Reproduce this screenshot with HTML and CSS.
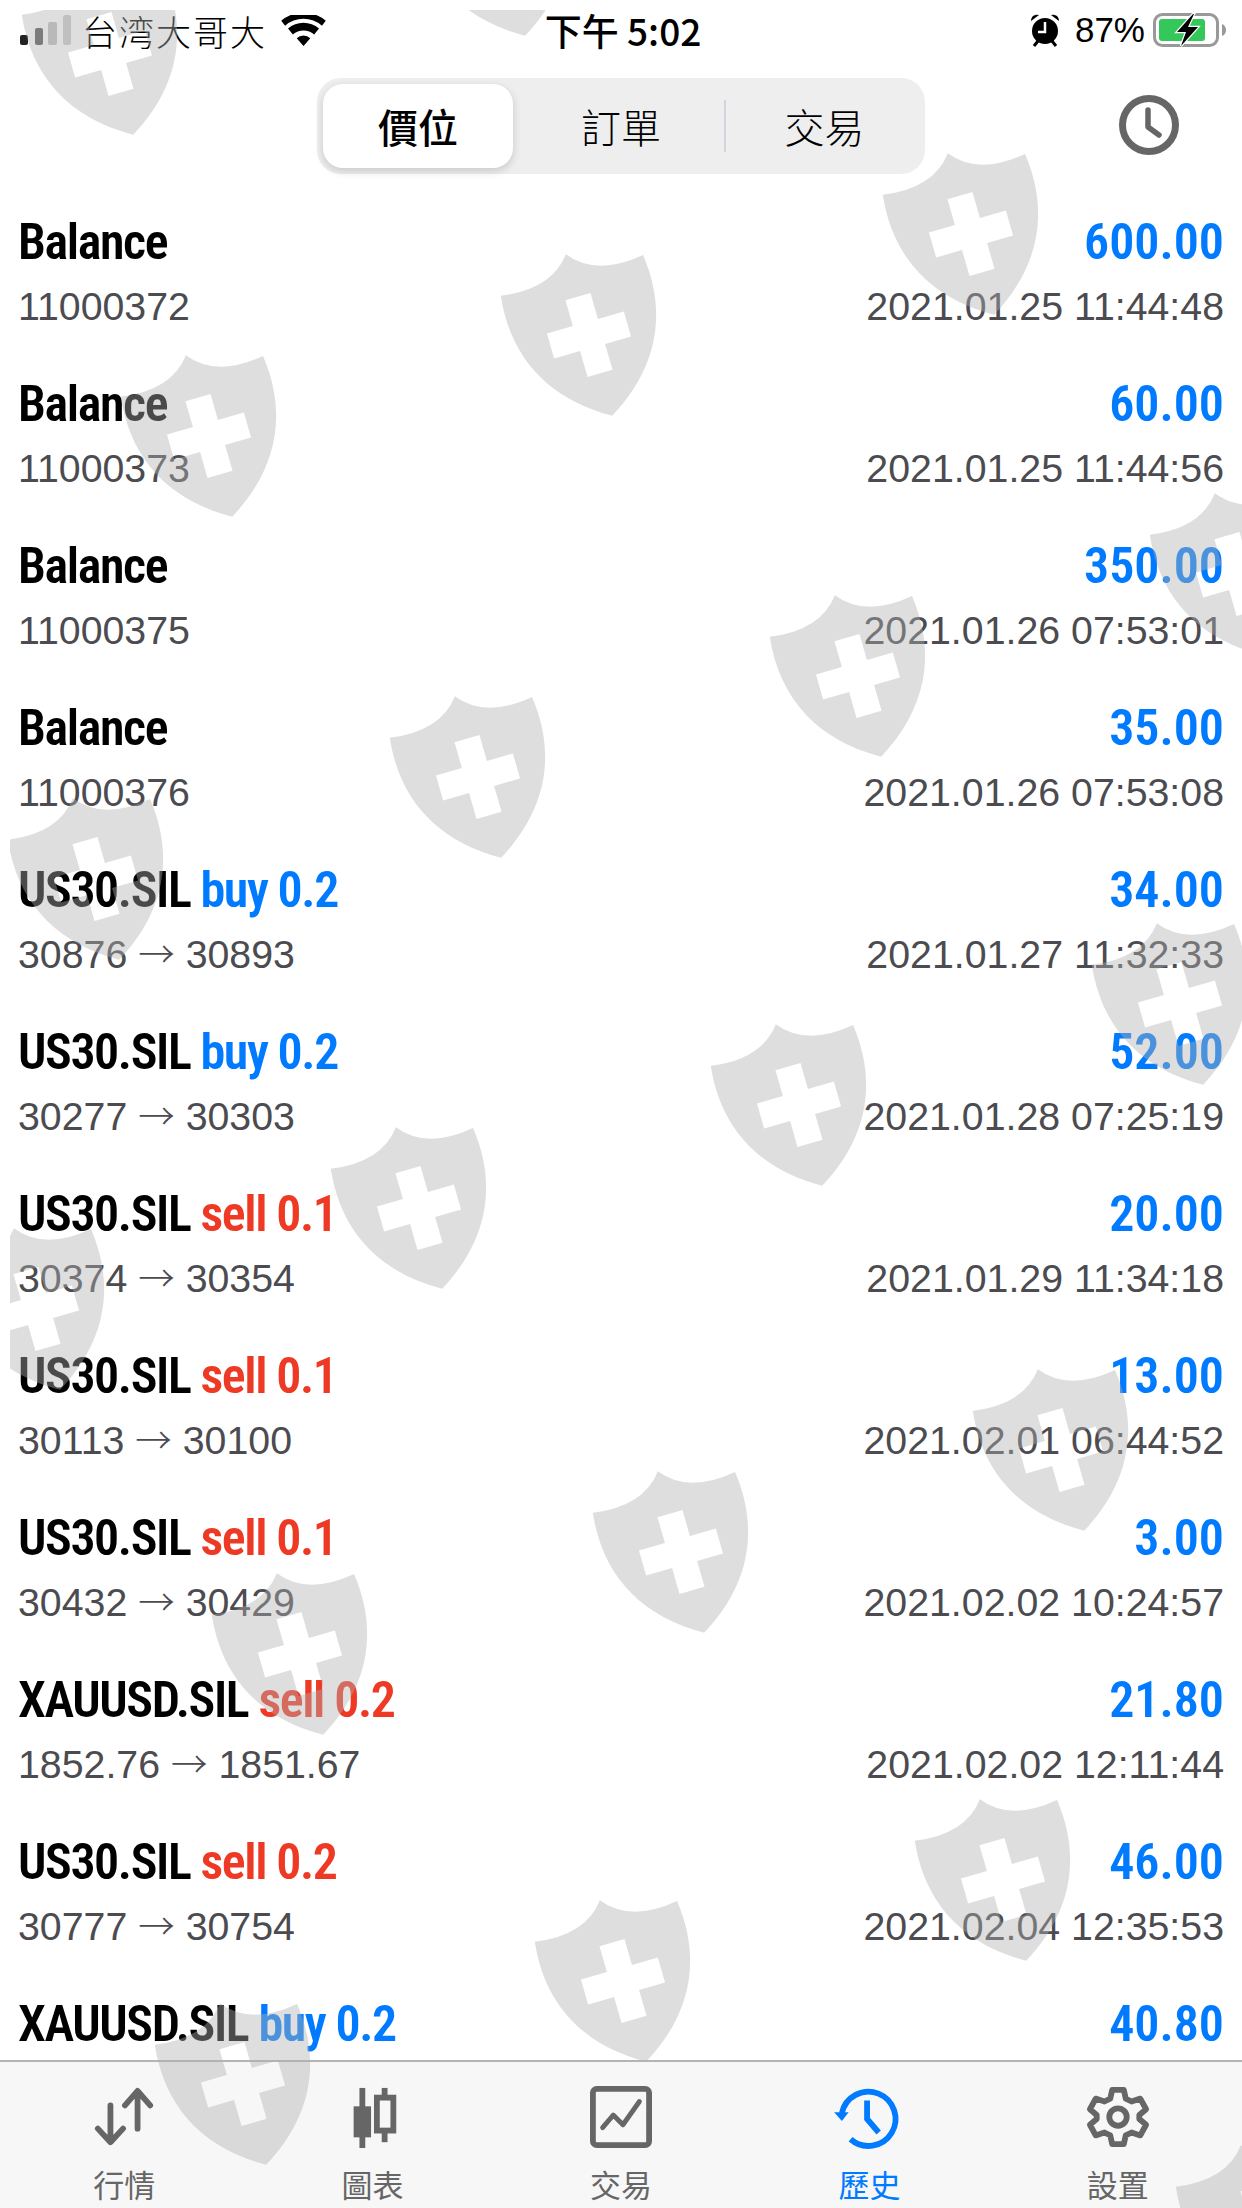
FILE: index.html
```html
<!DOCTYPE html>
<html lang="zh-Hant">
<head>
  <meta charset="UTF-8" />
  <title>歷史</title>
  <link rel="stylesheet" href="styles.css">
</head>
<body>
  <div class="screen">
    <div class="status-bar">
      <div class="status-left">
        <svg class="signal" viewBox="0 0 52 30">
          <rect x="0" y="20" width="8" height="10" rx="2" fill="#222"/>
          <rect x="15" y="13" width="8" height="17" rx="2" fill="#555"/>
          <rect x="28" y="7" width="9" height="23" rx="2" fill="#c0c0c0"/>
          <rect x="43" y="0" width="8" height="30" rx="2" fill="#ccc"/>
        </svg>
        <span class="carrier">台湾大哥大</span>
        <svg class="wifi" viewBox="0 0 46 32">
          <path d="M23 32l-7-8a10 10 0 0 1 14 0zM12 20l-5-6a24 24 0 0 1 32 0l-5 6a17 17 0 0 0-22 0zM4 11L0 6a35 35 0 0 1 46 0l-4 5a29 29 0 0 0-38 0z" fill="#000"/>
        </svg>
      </div>
      <div class="status-time">下午 5:02</div>
      <div class="status-right">
        <svg class="alarm" viewBox="0 0 30 34">
          <circle cx="15" cy="18" r="13" fill="#000"/>
          <path d="M1 8a6 6 0 0 1 8-6zM29 8a6 6 0 0 0-8-6z" fill="#000"/>
          <path d="M4 33l4-5M26 33l-4-5" stroke="#000" stroke-width="3"/>
          <path d="M15 9v10H8" stroke="#fff" stroke-width="2.5" fill="none"/>
        </svg>
        <span class="battery-pct">87%</span>
        <svg class="battery" viewBox="0 0 73 34">
          <rect x="1.5" y="1.5" width="63" height="31" rx="8" fill="#fff" stroke="#999" stroke-width="3"/>
          <rect x="6" y="6" width="46" height="22" rx="3" fill="#34c759"/>
          <path d="M69 11C72 12 73 15 73 17C73 19 72 22 69 23Z" fill="#999"/>
          <path d="M40 1L24 19H33L28 33L45 14H35L41 1Z" fill="#000" stroke="#fff" stroke-width="2.5" paint-order="stroke"/>
        </svg>
      </div>
    </div>

    <div class="toolbar">
      <div class="segments">
        <div class="segment selected">價位</div>
        <div class="segment middle">訂單</div>
        <div class="segment-line"></div>
        <div class="segment last">交易</div>
      </div>
      <svg class="history-btn" viewBox="0 0 60 60">
        <circle cx="30" cy="30" r="26.5" fill="none" stroke="#666" stroke-width="7"/>
        <path d="M29 15v17l11 8" fill="none" stroke="#666" stroke-width="5.5" stroke-linecap="round" stroke-linejoin="round"/>
      </svg>
    </div>

    <div class="deals">
      <div class="deal">
        <div class="line"><span class="title">Balance</span><span class="value">600.00</span></div>
        <div class="line sub"><span>11000372</span><span>2021.01.25 11:44:48</span></div>
      </div>
      <div class="deal">
        <div class="line"><span class="title">Balance</span><span class="value">60.00</span></div>
        <div class="line sub"><span>11000373</span><span>2021.01.25 11:44:56</span></div>
      </div>
      <div class="deal">
        <div class="line"><span class="title">Balance</span><span class="value">350.00</span></div>
        <div class="line sub"><span>11000375</span><span>2021.01.26 07:53:01</span></div>
      </div>
      <div class="deal">
        <div class="line"><span class="title">Balance</span><span class="value">35.00</span></div>
        <div class="line sub"><span>11000376</span><span>2021.01.26 07:53:08</span></div>
      </div>
      <div class="deal">
        <div class="line"><span class="title">US30.SIL <span class="buy">buy 0.2</span></span><span class="value">34.00</span></div>
        <div class="line sub"><span>30876 <span class="arrow">→</span> 30893</span><span>2021.01.27 11:32:33</span></div>
      </div>
      <div class="deal">
        <div class="line"><span class="title">US30.SIL <span class="buy">buy 0.2</span></span><span class="value">52.00</span></div>
        <div class="line sub"><span>30277 <span class="arrow">→</span> 30303</span><span>2021.01.28 07:25:19</span></div>
      </div>
      <div class="deal">
        <div class="line"><span class="title">US30.SIL <span class="sell">sell 0.1</span></span><span class="value">20.00</span></div>
        <div class="line sub"><span>30374 <span class="arrow">→</span> 30354</span><span>2021.01.29 11:34:18</span></div>
      </div>
      <div class="deal">
        <div class="line"><span class="title">US30.SIL <span class="sell">sell 0.1</span></span><span class="value">13.00</span></div>
        <div class="line sub"><span>30113 <span class="arrow">→</span> 30100</span><span>2021.02.01 06:44:52</span></div>
      </div>
      <div class="deal">
        <div class="line"><span class="title">US30.SIL <span class="sell">sell 0.1</span></span><span class="value">3.00</span></div>
        <div class="line sub"><span>30432 <span class="arrow">→</span> 30429</span><span>2021.02.02 10:24:57</span></div>
      </div>
      <div class="deal">
        <div class="line"><span class="title">XAUUSD.SIL <span class="sell">sell 0.2</span></span><span class="value">21.80</span></div>
        <div class="line sub"><span>1852.76 <span class="arrow">→</span> 1851.67</span><span>2021.02.02 12:11:44</span></div>
      </div>
      <div class="deal">
        <div class="line"><span class="title">US30.SIL <span class="sell">sell 0.2</span></span><span class="value">46.00</span></div>
        <div class="line sub"><span>30777 <span class="arrow">→</span> 30754</span><span>2021.02.04 12:35:53</span></div>
      </div>
      <div class="deal">
        <div class="line"><span class="title">XAUUSD.SIL <span class="buy">buy 0.2</span></span><span class="value">40.80</span></div>
      </div>
    </div>

    <div class="tabbar">
      <div class="tab">
        <svg class="tab-icon" viewBox="0 0 64 64">
          <path d="M18 20v37M5 44l13 14 13-14" fill="none" stroke="#666" stroke-width="6" stroke-linecap="round" stroke-linejoin="round"/>
          <path d="M46 44V6M33 20L46 5l13 15" fill="none" stroke="#666" stroke-width="6" stroke-linecap="round" stroke-linejoin="round"/>
        </svg>
        <span>行情</span>
      </div>
      <div class="tab">
        <svg class="tab-icon" viewBox="0 0 64 64">
          <path d="M21 2v62" stroke="#666" stroke-width="6"/>
          <rect x="12" y="21" width="18" height="32" fill="#666"/>
          <path d="M44 2v56" stroke="#666" stroke-width="6"/>
          <rect x="36" y="12" width="17" height="34" fill="#f7f7f7" stroke="#666" stroke-width="6"/>
        </svg>
        <span>圖表</span>
      </div>
      <div class="tab">
        <svg class="tab-icon" viewBox="0 0 64 64">
          <rect x="3" y="3" width="58" height="58" rx="4" fill="none" stroke="#666" stroke-width="6"/>
          <path d="M13 43l11-13 10 10 17-24" fill="none" stroke="#666" stroke-width="5" stroke-linecap="round" stroke-linejoin="round"/>
        </svg>
        <span>交易</span>
      </div>
      <div class="tab active">
        <svg class="tab-icon" viewBox="3 0 64 64">
          <path d="M7 28A28 28 0 1 1 16 55" fill="none" stroke="#007aff" stroke-width="6"/>
          <path d="M-1 27h15l-7 9z" fill="#007aff"/>
          <path d="M33 15v19l12 14" fill="none" stroke="#007aff" stroke-width="6"/>
        </svg>
        <span>歷史</span>
      </div>
      <div class="tab">
        <svg class="tab-icon" viewBox="0 0 64 64">
          <path d="M26 4h12l2 9 6 3 9-3 6 11-7 6v4l7 6-6 11-9-3-6 3-2 9H26l-2-9-6-3-9 3-6-11 7-6v-4l-7-6 6-11 9 3 6-3z" fill="none" stroke="#666" stroke-width="6" stroke-linejoin="round"/>
          <circle cx="32" cy="32" r="9" fill="none" stroke="#666" stroke-width="6"/>
        </svg>
        <span>設置</span>
      </div>
    </div>

    <!-- shield watermark, sits over everything -->
    <svg class="watermark">
      <defs>
        <path id="shield" fill-rule="evenodd" transform="translate(9,0) rotate(-16) translate(-71,-84)"
          d="M71 0Q94 30 145 22C153 85 127 135 71 168C15 135 -11 85 -3 22Q48 30 71 0ZM58 44V71H31V97H58V124H84V97H111V71H84V44Z"/>
      </defs>
      <use href="#shield" transform="translate(91,44)"/>
      <use href="#shield" transform="translate(483,-55)"/>
      <use href="#shield" transform="translate(952,224)"/>
      <use href="#shield" transform="translate(570,325)"/>
      <use href="#shield" transform="translate(190,426)"/>
      <use href="#shield" transform="translate(1219,564)"/>
      <use href="#shield" transform="translate(839,666)"/>
      <use href="#shield" transform="translate(459,767)"/>
      <use href="#shield" transform="translate(77,869)"/>
      <use href="#shield" transform="translate(1161,994)"/>
      <use href="#shield" transform="translate(780,1095)"/>
      <use href="#shield" transform="translate(400,1198)"/>
      <use href="#shield" transform="translate(18,1299)"/>
      <use href="#shield" transform="translate(1042,1440)"/>
      <use href="#shield" transform="translate(662,1542)"/>
      <use href="#shield" transform="translate(281,1644)"/>
      <use href="#shield" transform="translate(984,1870)"/>
      <use href="#shield" transform="translate(604,1971)"/>
      <use href="#shield" transform="translate(224,2074)"/>
      <use href="#shield" transform="translate(1245,2216)"/>
    </svg>
  </div>
</body>
</html>
```

FILE: styles.css
```css
* {
  margin: 0;
  padding: 0;
  box-sizing: border-box;
}

body {
  background: #fff;
  font-family: "Liberation Sans", "Noto Sans CJK TC", sans-serif;
  overflow: hidden;
}

.screen {
  position: relative;
  width: 1242px;
  height: 2208px;
  display: flex;
  flex-direction: column;
  overflow: hidden;
}

/* status bar */
.status-bar {
  height: 60px;
  padding: 0 16px 0 20px;
  display: grid;
  grid-template-columns: 1fr auto 1fr;
  align-items: center;
  font-size: 35px;
  color: #000;
}

.status-left {
  display: flex;
  align-items: center;
}

.signal {
  width: 52px;
  height: 30px;
}

.carrier {
  margin-left: 10px;
  font-family: "Noto Sans CJK TC", sans-serif;
  font-weight: 300;
  letter-spacing: 2px;
}

.wifi {
  width: 45px;
  height: 31px;
  margin-left: 14px;
}

.status-time {
  font-weight: 500;
  font-size: 37px;
  font-family: "Noto Sans CJK TC", sans-serif;
}

.status-right {
  display: flex;
  align-items: center;
  justify-content: flex-end;
}

.alarm {
  width: 30px;
  height: 34px;
}

.battery-pct {
  margin: 0 8px 0 15px;
}

.battery {
  width: 73px;
  height: 34px;
}

/* segmented control */
.toolbar {
  height: 150px;
  position: relative;
  display: flex;
  align-items: flex-start;
  justify-content: center;
  padding-top: 18px;
}

.segments {
  width: 608px;
  height: 96px;
  padding: 6px;
  background: #eeeeef;
  border-radius: 24px;
  display: flex;
  align-items: center;
  font-family: "Noto Sans CJK TC", sans-serif;
  font-size: 40px;
  color: #000;
}

.segment {
  flex: 1;
  text-align: center;
  font-weight: 300;
}

.segment.middle {
  flex: none;
  width: 211px;
  padding-left: 5px;
}

.segment.last {
  padding-left: 4px;
}

.segment.selected {
  flex: none;
  width: 190px;
  height: 84px;
  line-height: 84px;
  background: #fff;
  border-radius: 20px;
  font-weight: 500;
  box-shadow: 0 3px 8px rgba(0,0,0,0.16);
}

.segment-line {
  width: 2px;
  height: 52px;
  background: #d4d4de;
}

.history-btn {
  position: absolute;
  right: 63px;
  top: 35px;
  width: 60px;
  height: 60px;
}

/* deals */
.deals {
  flex: 1;
  min-height: 0;
  overflow: hidden;
  padding: 0 18px;
}

.deal {
  height: 162px;
}

.line {
  display: flex;
  justify-content: space-between;
  align-items: baseline;
}

.title,
.value {
  font-family: "Roboto Condensed", Roboto, sans-serif;
  font-stretch: condensed;
  font-size: 50px;
  font-weight: 600;
  letter-spacing: -1.4px;
  line-height: 64px;
  color: #000;
}

.value {
  letter-spacing: 0;
}

.value,
.buy {
  color: #007aff;
}

.sell {
  color: #ee3a24;
}

.sub {
  font-size: 39.3px;
  line-height: 64px;
  color: #4b4b50;
}

.arrow {
  font-family: "Noto Sans CJK TC", sans-serif;
  font-size: 0.93em;
  font-weight: 300;
  line-height: 1;
}

/* tab bar */
.tabbar {
  height: 148px;
  background: #f7f7f7;
  border-top: 2px solid #b4b4b4;
  display: grid;
  grid-template-columns: repeat(5, 1fr);
}

.tab {
  padding-top: 24px;
  display: flex;
  flex-direction: column;
  align-items: center;
  font-family: "Noto Sans CJK TC", sans-serif;
  font-size: 31px;
  line-height: 40px;
  color: #666;
}

.tab.active {
  color: #007aff;
}

.tab-icon {
  width: 62px;
  height: 62px;
  margin-bottom: 16px;
  overflow: visible;
}

.watermark {
  position: absolute;
  top: 10px;
  left: 10px;
  width: 1400px;
  height: 2198px;
  fill: rgba(176,176,176,0.42);
  pointer-events: none;
}
```
